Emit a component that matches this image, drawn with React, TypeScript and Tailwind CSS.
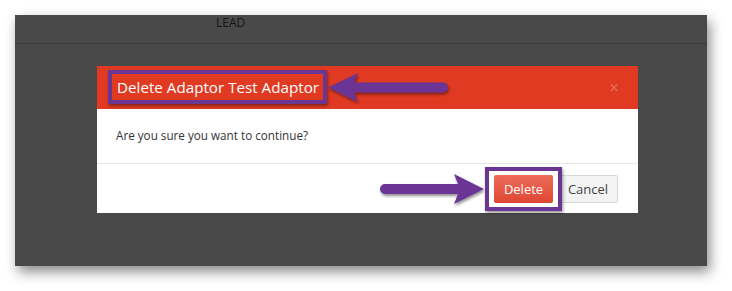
import React from "react";

function Arrow({ x, y, w, h, tipLeft }: { x: number; y: number; w: number; h: number; tipLeft: boolean }) {
  const cy = h / 2;
  const head = 30;
  const shaft = 10;
  const d = tipLeft
    ? `M0 ${cy} L${head} 0 L${head - 4} ${cy - shaft / 2} L${w - shaft / 2} ${cy - shaft / 2} A${shaft / 2} ${shaft / 2} 0 0 1 ${w - shaft / 2} ${cy + shaft / 2} L${head - 4} ${cy + shaft / 2} L${head} ${h} Z`
    : `M${w} ${cy} L${w - head} 0 L${w - head + 4} ${cy - shaft / 2} L${shaft / 2} ${cy - shaft / 2} A${shaft / 2} ${shaft / 2} 0 0 0 ${shaft / 2} ${cy + shaft / 2} L${w - head + 4} ${cy + shaft / 2} L${w - head} ${h} Z`;
  return (
    <svg
      className="absolute overflow-visible"
      style={{ left: x, top: y, width: w, height: h }}
      viewBox={`0 0 ${w} ${h}`}
    >
      <defs>
        <filter id={`sh${x}`} x="-20%" y="-50%" width="140%" height="200%">
          <feDropShadow dx="1" dy="2" stdDeviation="1.5" floodColor="#000" floodOpacity="0.45" />
        </filter>
      </defs>
      <path d={d} fill="#6b3594" filter={`url(#sh${x})`} />
    </svg>
  );
}

export default function App() {
  return (
    <div className="relative w-[732px] h-[291px] bg-white overflow-hidden" style={{ fontFamily: '"Open Sans", "Noto Sans", sans-serif' }}>
      <div className="pt-[15px] pl-[15px]">
        <div className="w-[692px] h-[251px] bg-[#494949] shadow-[3px_6px_12px_rgba(0,0,0,0.45)] flex flex-col">
          <div className="h-[29px] border-b border-[#3a3a3a] pl-[201px] text-[12px] leading-[16px] text-[#161616] flex items-start">
            <span>LEAD</span>
          </div>
          <div className="ml-[82px] mt-[22px] w-[541px] bg-white flex flex-col">
            <div className="h-[43px] bg-[#e13a22] flex items-center justify-between pl-[20px] pr-[19px]">
              <span className="text-white text-[15.2px] leading-none">Delete Adaptor Test Adaptor</span>
              <span className="text-[#ee8a82] opacity-70 text-[12px] leading-none">✕</span>
            </div>
            <div className="h-[54px] flex items-center pl-[19px] text-[11.7px] text-[#333]">
              Are you sure you want to continue?
            </div>
            <div className="border-t border-[#e6e6e6] h-[50px] flex items-start justify-end pr-[20px] pt-[11px] gap-[5px]">
              <button className="w-[59px] h-[28px] rounded-[2px] bg-gradient-to-b from-[#ef6b5a] to-[#df4632] text-white text-[13px] leading-none">
                Delete
              </button>
              <button className="w-[60px] h-[28px] rounded-[2px] bg-[#f3f3f3] border border-[#d8d8d8] text-[#444] text-[13px] leading-none">
                Cancel
              </button>
            </div>
          </div>
        </div>
      </div>

      <div className="absolute left-[108px] top-[70px] w-[219px] h-[34px] border-[4px] border-[#6b3594] shadow-[1px_2px_3px_rgba(0,0,0,0.4)]" />
      <div className="absolute left-[485px] top-[167px] w-[77px] h-[44px] border-[4px] border-[#6b3594] shadow-[1px_2px_3px_rgba(0,0,0,0.4)]" />

      <Arrow x={328} y={73} w={120} h={29} tipLeft={true} />
      <Arrow x={380} y={174} w={104} h={30} tipLeft={false} />
    </div>
  );
}
